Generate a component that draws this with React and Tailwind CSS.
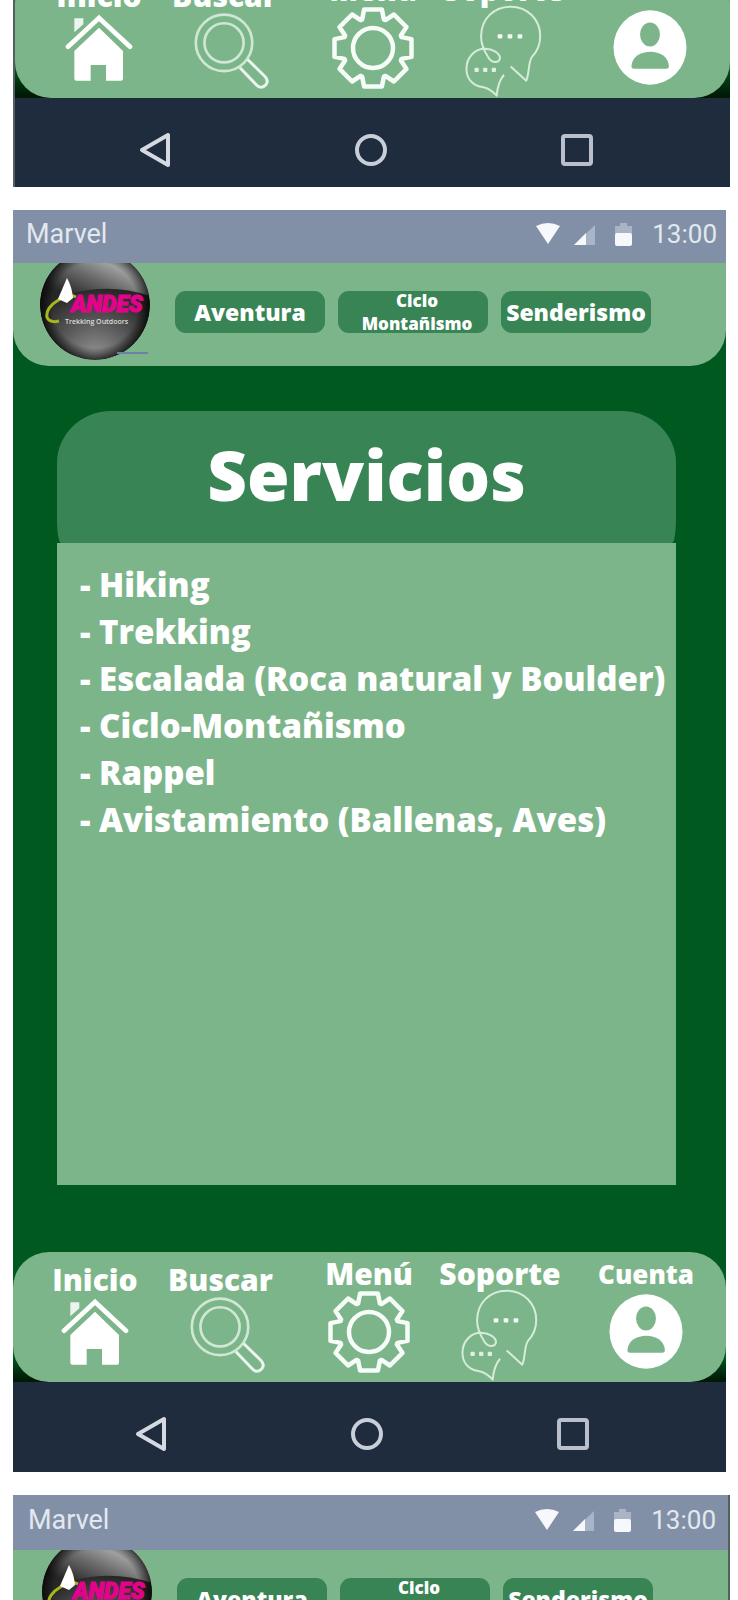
const services = [
  'Hiking',
  'Trekking',
  'Escalada (Roca natural y Boulder)',
  'Ciclo-Montañismo',
  'Rappel',
  'Avistamiento (Ballenas, Aves)',
];

function HomeIcon() {
  return (
    <svg viewBox="185 415 204 204" className="h-[68px] w-[68px]" aria-hidden="true">
      <path d="M213 428h27v18l-27 24z" fill="#fff" opacity="0.85" />
      <path d="M194 513L287 427L380 513" fill="none" stroke="#fff" strokeWidth="14" strokeLinecap="round" />
      <path d="M287 456L359 526V609Q359 615 353 615H308V568H262V615H219Q213 615 213 609V526Z" fill="#fff" />
    </svg>
  );
}

function SearchIcon() {
  return (
    <svg viewBox="570 405 228 235" className="h-[78px] w-[76px]" fill="none" aria-hidden="true">
      <g stroke="#cfe7d4" strokeWidth="8">
        <circle cx="660" cy="498" r="85" />
        <circle cx="660" cy="498" r="59" />
      </g>
      <path
        d="M708 573L757 624Q772 640 786 624Q796 612 782 598L731 548"
        stroke="#eaf6ec"
        strokeWidth="9"
        strokeLinejoin="round"
      />
    </svg>
  );
}

const gearPoints = Array.from({ length: 8 }, (_, i) =>
  [
    [-21, 30.5],
    [-13, 39.5],
    [13, 39.5],
    [21, 30.5],
  ].map(([deg, r]) => {
    const a = ((i * 45 + deg) * Math.PI) / 180;
    return `${(r * Math.sin(a)).toFixed(1)},${(-r * Math.cos(a)).toFixed(1)}`;
  }),
)
  .flat()
  .join(' ');

function GearIcon() {
  return (
    <svg viewBox="-42 -42 84 84" className="h-[84px] w-[84px]" fill="none" stroke="#f6fcf7" strokeWidth="4.5" aria-hidden="true">
      <polygon points={gearPoints} strokeLinejoin="round" />
      <circle r="20" />
    </svg>
  );
}

function ChatIcon() {
  return (
    <svg viewBox="280 385 240 280" className="h-[93px] w-20" fill="none" aria-hidden="true">
      <path
        d="M400 595Q381 618 378 658Q358 636 335 632C302 626 287 604 287 577C287 542 312 517 343 517C366 517 388 530 388 545C386 560 364 562 353 543C337 519 331 501 331 480C331 428 368 390 420 390C472 390 509 430 509 478C509 504 499 525 485 540C472 557 478 585 467 613L420 570"
        stroke="#d6ecda"
        strokeWidth="6"
        strokeLinejoin="round"
      />
      <g fill="#f4fbf5">
        <rect x="381" y="473" width="14" height="13" rx="3" />
        <rect x="411" y="473" width="14" height="13" rx="3" />
        <rect x="441" y="473" width="14" height="13" rx="3" />
      </g>
      <g fill="#dff0e2">
        <rect x="311" y="574" width="13" height="13" rx="3" />
        <rect x="337" y="574" width="13" height="13" rx="3" />
        <rect x="363" y="574" width="13" height="13" rx="3" />
      </g>
    </svg>
  );
}

function AccountIcon() {
  return (
    <svg viewBox="722 403 222 226" className="h-[75px] w-[74px]" aria-hidden="true">
      <ellipse cx="833" cy="516" rx="110" ry="112" fill="#fff" />
      <ellipse cx="833" cy="477" rx="30" ry="36" fill="#7db58a" />
      <path d="M777 572C779 543 806 529 834 529C862 529 888 543 890 572Q890 580 882 580H785Q777 580 777 572Z" fill="#7db58a" />
    </svg>
  );
}

const tabs = [
  { label: 'Inicio', Icon: HomeIcon, box: 'ml-[39px] w-[86px] pt-3.5', text: 'text-[30px]', icon: 'mt-1' },
  { label: 'Buscar', Icon: SearchIcon, box: 'ml-[29px] w-[107px] pt-3.5', text: 'text-[30px]', icon: 'mt-0.5 pl-3.5' },
  { label: 'Menú', Icon: GearIcon, box: 'ml-[52px] w-[86px] pt-2', text: 'text-[30px]', icon: 'mt-0.5' },
  { label: 'Soporte', Icon: ChatIcon, box: 'ml-[27px] w-[122px] pt-2', text: 'text-[30px]', icon: 'mt-px' },
  { label: 'Cuenta', Icon: AccountIcon, box: 'ml-[37px] w-[96px] pt-2', text: 'text-[26px]', icon: 'mt-1.5' },
];

function TabBar({ className = '' }) {
  return (
    <nav className={`flex h-[130px] items-start rounded-[36px] bg-[#7db58a] ${className}`}>
      {tabs.map(({ label, Icon, box, text, icon }) => (
        <button key={label} type="button" className={`flex shrink-0 flex-col items-center ${box}`}>
          <span className={`leading-7 font-extrabold whitespace-nowrap ${text}`}>{label}</span>
          <span className={icon}>
            <Icon />
          </span>
        </button>
      ))}
    </nav>
  );
}

function SystemNav({ className = '' }) {
  return (
    <div
      className={`grid shrink-0 grid-cols-[276fr_154fr_258fr] items-center justify-items-center bg-[#1e2c3d] pt-3.5 pr-6 ${className}`}
    >
      <button type="button" aria-label="Atrás">
        <svg viewBox="0 0 34 38" className="h-[38px] w-[34px]" fill="none" stroke="#d5dae2" strokeWidth="4" strokeLinejoin="round">
          <path d="M4 19L30 4V34Z" />
        </svg>
      </button>
      <button type="button" aria-label="Pantalla principal">
        <svg viewBox="0 0 34 34" className="h-[34px] w-[34px]" fill="none" stroke="#c9cfd8" strokeWidth="4">
          <circle cx="17" cy="17" r="14" />
        </svg>
      </button>
      <button type="button" aria-label="Recientes">
        <svg viewBox="0 0 34 34" className="h-[34px] w-[34px]" fill="none" stroke="#b9c0cb" strokeWidth="4">
          <rect x="3" y="3" width="28" height="28" rx="2" />
        </svg>
      </button>
    </div>
  );
}

function StatusBar({ className = '' }) {
  return (
    <div
      className={`flex items-center bg-[#8190a7] pb-[5px] font-['Roboto',sans-serif] text-[27px] leading-8 text-[#e3e8f0] ${className}`}
    >
      <span className="mr-auto">Marvel</span>
      <svg viewBox="0 0 100 26" className="mr-[17px] h-[26px] w-[100px]" aria-hidden="true">
        <path d="M1 5Q13 -1 25 5L13 23Z" fill="#f6f8fb" />
        <path d="M39 24L60 4V24Z" fill="#a9b4c6" />
        <path d="M39 24L51 12V24Z" fill="#f6f8fb" />
        <path d="M85 2H92V5H97V13H80V5H85Z" fill="#a9b4c6" />
        <rect x="80" y="12" width="17" height="13" rx="2" fill="#f6f8fb" />
      </svg>
      <span className="text-[26px]">13:00</span>
    </div>
  );
}

function Logo({ id }) {
  return (
    <svg viewBox="0 0 114 103" className="h-[103px] w-[114px] shrink-0" role="img" aria-label="Andes">
      <defs>
        <radialGradient id={`${id}-low`} cx="0.5" cy="1" r="0.66">
          <stop offset="0" stopColor="#999" />
          <stop offset="0.5" stopColor="#5c5c5c" />
          <stop offset="1" stopColor="#262626" />
        </radialGradient>
        <linearGradient id={`${id}-high`} x1="0.15" y1="0.85" x2="0.75" y2="0.2">
          <stop offset="0.1" stopColor="#262626" />
          <stop offset="0.55" stopColor="#6c6c6c" />
          <stop offset="1" stopColor="#bbb" />
        </linearGradient>
        <radialGradient id={`${id}-rim`}>
          <stop offset="0.78" stopColor="#000" stopOpacity="0" />
          <stop offset="1" stopColor="#000" stopOpacity="0.7" />
        </radialGradient>
        <clipPath id={`${id}-ball`}>
          <circle cx="56" cy="42" r="55" />
        </clipPath>
      </defs>
      <g clipPath={`url(#${id}-ball)`}>
        <circle cx="56" cy="42" r="55" fill={`url(#${id}-low)`} />
        <path d="M0 -13H114V34Q60 14 0 42Z" fill={`url(#${id}-high)`} />
        <circle cx="56" cy="42" r="55" fill={`url(#${id}-rim)`} />
      </g>
      <path d="M78 90H109" stroke="#6f7fa5" strokeWidth="2" />
      <path d="M20 58C4 62 4 46 18 38C24 34 31 31 37 34" fill="none" stroke="#a9b51c" strokeWidth="3" />
      <path d="M28 15Q33 24 34 35L28 40L19 36Z" fill="#fff" />
      <text
        x="32"
        y="49"
        fontSize="23"
        fontWeight="900"
        fontStyle="italic"
        fill="#e3028c"
        stroke="#e3028c"
        strokeWidth="1"
        fontFamily="Roboto, sans-serif"
      >
        ANDES
      </text>
      <text x="26" y="61" fontSize="7" fontWeight="600" fill="#ddd" fontFamily="Open Sans, sans-serif">
        Trekking Outdoors
      </text>
    </svg>
  );
}

function Header({ id, className = '' }) {
  const chip =
    'flex h-[42px] w-[150px] items-center justify-center rounded-[11px] bg-[#388455] text-center font-extrabold whitespace-nowrap';
  return (
    <header className={`flex h-[103px] items-start bg-[#7db58a] ${className}`}>
      <Logo id={id} />
      <div className="ml-[22px] flex gap-[13px] pt-7">
        <button type="button" className={`${chip} text-[23px]`}>
          Aventura
        </button>
        <button type="button" className={`${chip} pl-2 text-[17px] leading-[23px]`}>
          <span>
            Ciclo
            <br />
            Montañismo
          </span>
        </button>
        <button type="button" className={`${chip} text-[23px]`}>
          Senderismo
        </button>
      </div>
    </header>
  );
}

export default function App() {
  return (
    <div className="flex flex-col gap-[23px] overflow-hidden bg-white pl-[13px] font-['Open_Sans',sans-serif] text-white">
      <section className="mr-2 flex h-[187px] flex-col justify-end overflow-hidden border-l-2 border-[#555f60]">
        <div className="shrink-0 bg-linear-to-t from-[#001a06] from-2% to-[#005a20] to-25%">
          <TabBar className="pl-0.5" />
        </div>
        <SystemNav className="h-[89px] pl-0.5" />
      </section>

      <section className="mr-3">
        <StatusBar className="h-[53px] pr-[9px] pl-[13px]" />
        <div className="bg-[#005a20]">
          <Header id="logo-main" className="rounded-b-[36px] pl-[26px]" />
          <main className="pt-[45px] pr-[50px] pb-[67px] pl-11">
            <h1 className="flex h-[132px] items-center justify-center rounded-[54px_54px_4px_4px/52px_52px_24px_24px] bg-[#388455] pb-[5px] text-[69px] font-extrabold">
              Servicios
            </h1>
            <ul className="min-h-[642px] bg-[#7db58a] px-[23px] pt-[18px] text-[33px] leading-[47px] font-extrabold whitespace-nowrap">
              {services.map((s) => (
                <li key={s}>- {s}</li>
              ))}
            </ul>
          </main>
        </div>
        <div className="bg-linear-to-t from-[#001a06] from-2% to-[#005a20] to-20%">
          <TabBar />
        </div>
        <SystemNav className="h-[90px]" />
      </section>

      <section className="mr-2 h-[105px] overflow-hidden border-r-2 border-[#555f60]">
        <StatusBar className="h-[55px] pr-3 pl-[15px]" />
        <Header id="logo-next" className="pl-7" />
      </section>
    </div>
  );
}
